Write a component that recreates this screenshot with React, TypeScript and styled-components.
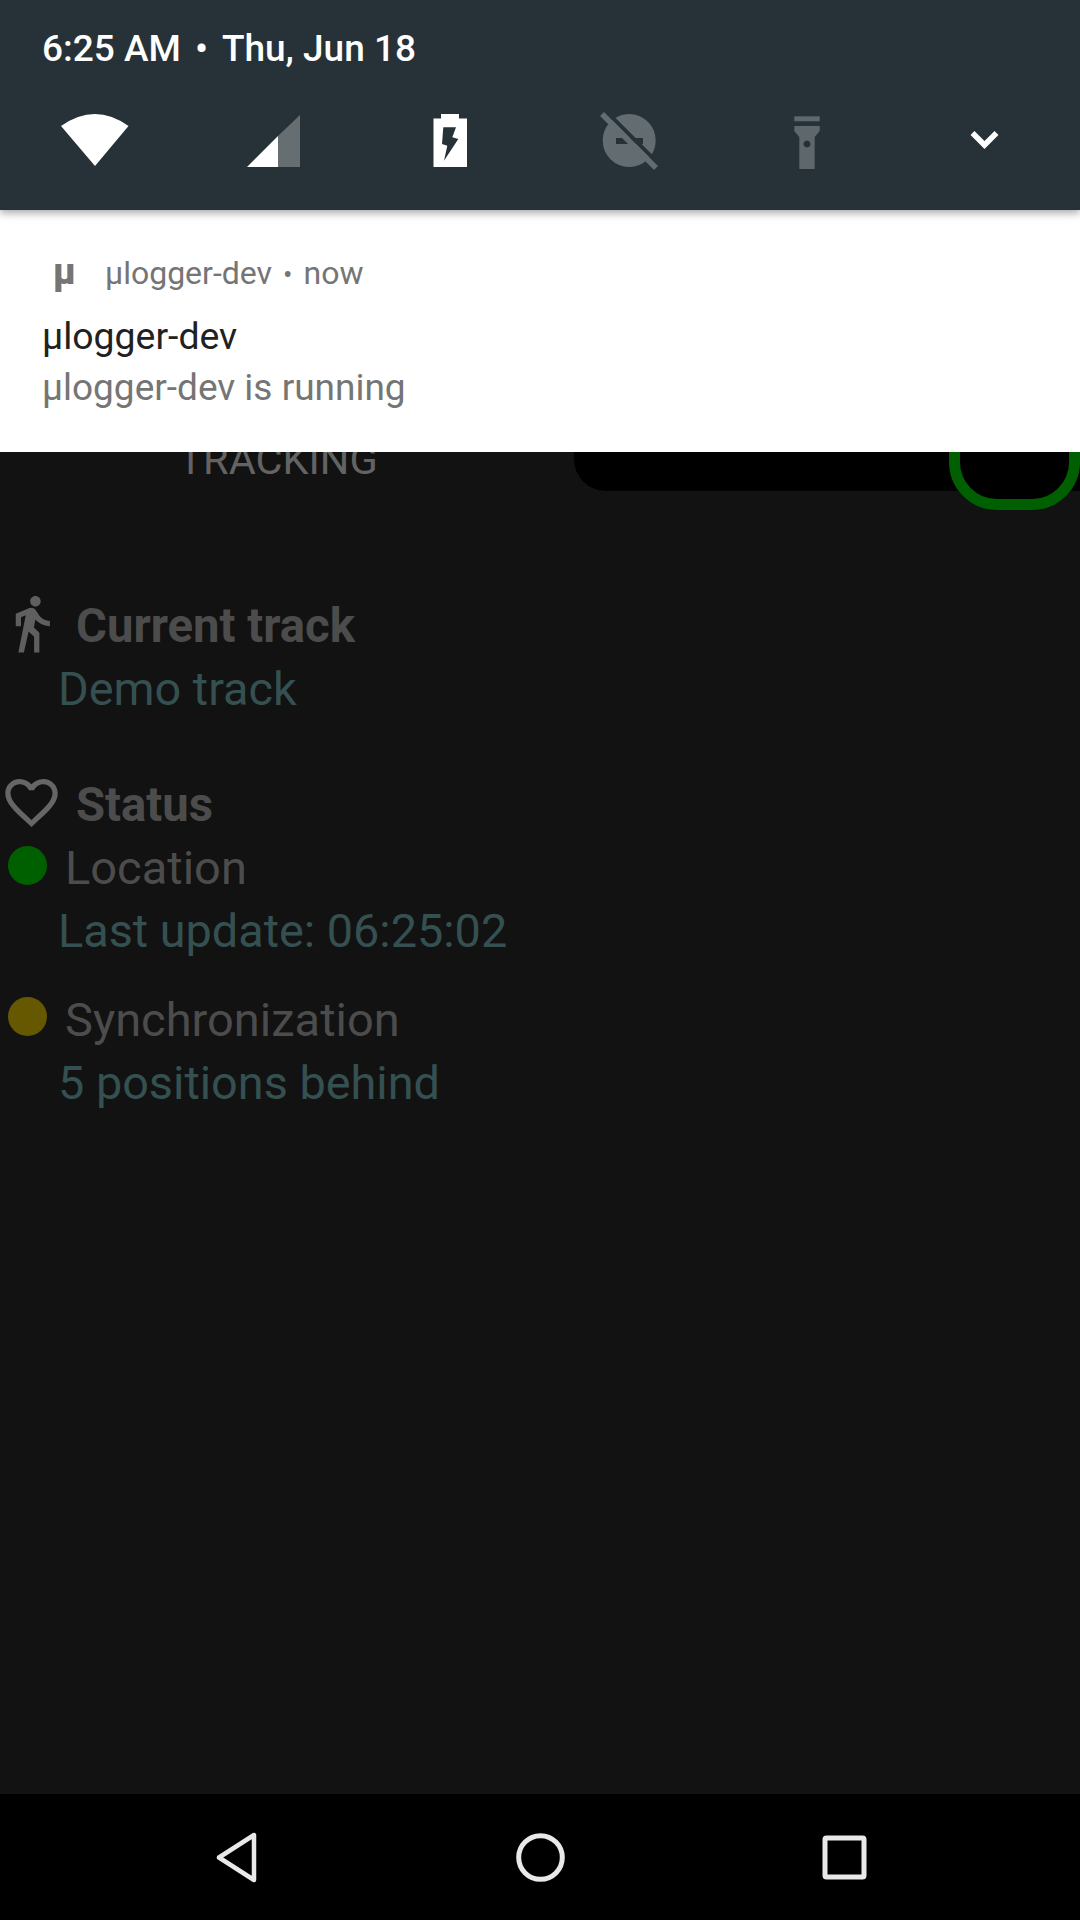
import styled, { createGlobalStyle } from "styled-components"

const GlobalStyle = createGlobalStyle`
    html, body {
        margin: 0;
        padding: 0;
        background: #121212;
    }
    body {
        font-family: Roboto, "Noto Sans", sans-serif;
    }
`

export default function App() {
    return <Screen>
        <GlobalStyle />
        <AppBody>
            <TrackingRow>
                <TrackingLabel>TRACKING</TrackingLabel>
                <SwitchTrack>
                    <SwitchThumb />
                </SwitchTrack>
            </TrackingRow>
            <Section>
                <SectionHead>
                    <SectionIcon viewBox="0 0 24 24">
                        <path fill="#5f5f5f" d="M13.5 5.5c1.1 0 2-.9 2-2s-.9-2-2-2-2 .9-2 2 .9 2 2 2zM9.8 8.9L7 23h2.1l1.8-8 2.1 2v6h2v-7.5l-2.1-2 .6-3C14.8 12 16.8 13 19 13v-2c-1.9 0-3.5-1-4.3-2.4l-1-1.6c-.4-.6-1-1-1.7-1-.3 0-.5.1-.8.1L6 8.3V13h2V9.6l1.8-.7" />
                    </SectionIcon>
                    <SectionTitle>Current track</SectionTitle>
                </SectionHead>
                <Detail>Demo track</Detail>
            </Section>
            <Section $gap={53}>
                <SectionHead>
                    <SectionIcon viewBox="0 0 24 24">
                        <path fill="#666666" d="M16.5 3c-1.74 0-3.41.81-4.5 2.09C10.91 3.81 9.24 3 7.5 3 4.42 3 2 5.42 2 8.5c0 3.78 3.4 6.86 8.55 11.54L12 21.35l1.45-1.32C18.6 15.36 22 12.28 22 8.5 22 5.42 19.58 3 16.5 3zm-4.4 15.55l-.1.1-.1-.1C7.14 14.24 4 11.39 4 8.5 4 6.5 5.5 5 7.5 5c1.54 0 3.04.99 3.57 2.36h1.87C13.46 5.99 14.96 5 16.5 5c2 0 3.5 1.5 3.5 3.5 0 2.89-3.14 5.74-7.9 10.05z" />
                    </SectionIcon>
                    <SectionTitle>Status</SectionTitle>
                </SectionHead>
                <StatusRow>
                    <StatusDot $color="#006000" $top={9} />
                    <StatusName>Location</StatusName>
                </StatusRow>
                <Detail>Last update: 06:25:02</Detail>
                <StatusRow $gap={26}>
                    <StatusDot $color="#665800" $top={8} />
                    <StatusName>Synchronization</StatusName>
                </StatusRow>
                <Detail>5 positions behind</Detail>
            </Section>
        </AppBody>
        <NavBar>
            <svg width="63" height="63" viewBox="0 0 63 63">
                <path d="M14 31.5 L49 9 V54 Z" fill="none" stroke="#e9e9e9" strokeWidth="4.5" strokeLinejoin="round" />
            </svg>
            <svg width="63" height="63" viewBox="0 0 63 63">
                <circle cx="31.5" cy="31.5" r="21.8" fill="none" stroke="#e9e9e9" strokeWidth="5" />
            </svg>
            <svg width="63" height="63" viewBox="0 0 63 63">
                <rect x="12" y="12" width="39" height="39" rx="1.5" fill="none" stroke="#e9e9e9" strokeWidth="5" />
            </svg>
        </NavBar>
        <Shade>
            <QuickHeader>
                <DateLine>6:25 AM<DateDot>•</DateDot>Thu, Jun 18</DateLine>
                <QuickIcons>
                    <svg width="72" height="72" viewBox="0 0 72 72">
                        <path d="M2 22 Q36 -2 69.5 22 L36 62 Z" fill="#ffffff" />
                    </svg>
                    <svg width="72" height="72" viewBox="0 0 72 72">
                        <path d="M10 63 L41 32 V63 Z" fill="#ffffff" />
                        <path d="M41 32 L63 11 V63 H41 Z" fill="#676e72" />
                    </svg>
                    <svg width="72" height="72" viewBox="0 0 72 72">
                        <path d="M26 10 H44 V14.5 H52 V63 H18.5 V14.5 H26 Z" fill="#ffffff" />
                        <path d="M28.3 23.3 H41 L37.3 33.3 L43.3 35 L29 56.7 L32.3 41.7 L27 40 Z" fill="#263238" />
                    </svg>
                    <svg width="72" height="72" viewBox="0 0 72 72">
                        <circle cx="36.2" cy="36.5" r="26.5" fill="#626c71" />
                        <rect x="23" y="34" width="27" height="6" fill="#263238" />
                        <path d="M12.4 6.6 L66.4 60.6" stroke="#263238" strokeWidth="4" />
                        <path d="M9 10 L63 64" stroke="#626c71" strokeWidth="5.5" />
                    </svg>
                    <svg width="72" height="72" viewBox="0 0 72 72">
                        <path d="M23.3 12.3 H48.7 V17.3 H23.3 Z" fill="#5d676c" />
                        <path fillRule="evenodd" d="M23.3 22 H48.7 V27 L43.7 33 V65 H28.3 V33 L23.3 27 Z M36 36.5 a3.5 3.5 0 1 0 0.01 0 Z" fill="#5d676c" />
                    </svg>
                    <svg width="72" height="72" viewBox="0 0 72 72">
                        <path d="M23.5 29 L35.5 41 L47.5 29" fill="none" stroke="#ffffff" strokeWidth="5.5" />
                    </svg>
                </QuickIcons>
            </QuickHeader>
            <Notification>
                <NotificationMeta>
                    <AppGlyph>µ</AppGlyph>
                    <MetaText>µlogger-dev<MetaDot>•</MetaDot>now</MetaText>
                </NotificationMeta>
                <NotificationTitle>µlogger-dev</NotificationTitle>
                <NotificationBody>µlogger-dev is running</NotificationBody>
            </Notification>
        </Shade>
    </Screen>
}

const Screen = styled.div`
    position: relative;
    width: 1080px;
    height: 1920px;
    overflow: hidden;
    display: flex;
    flex-direction: column;
    background: #121212;
`

const AppBody = styled.main`
    flex: 1;
    padding-top: 390px;
`

const TrackingRow = styled.div`
    display: flex;
    height: 101px;
    margin-bottom: -1px;
    padding-left: 574px;
    position: relative;
`

const TrackingLabel = styled.span`
    position: absolute;
    left: 0;
    bottom: 8px;
    width: 556px;
    text-align: center;
    font-size: 41.5px;
    line-height: 46px;
    color: #636363;
`

const SwitchTrack = styled.div`
    position: relative;
    flex: 1;
    background: #000000;
    border-radius: 0 0 0 32px;
`

const SwitchThumb = styled.div`
    position: absolute;
    right: 0;
    bottom: -19px;
    box-sizing: border-box;
    width: 131px;
    height: 131px;
    border: 11px solid #005f00;
    border-radius: 48px;
    background: #000000;
`

const Section = styled.section<{ $gap?: number }>`
    margin-top: ${p => p.$gap ?? 105}px;
`

const SectionHead = styled.div`
    display: flex;
    height: 63px;
`

const SectionIcon = styled.svg`
    width: 63px;
    height: 63px;
    margin-top: -3px;
    flex: none;
`

const SectionTitle = styled.h2`
    margin: 0 0 0 13px;
    font-size: 47.25px;
    font-weight: 700;
    line-height: 63px;
    color: #4c4c4c;
`

const Detail = styled.div`
    height: 63px;
    padding-left: 58px;
    font-size: 46.8px;
    line-height: 62px;
    color: #355050;
`

const StatusRow = styled.div<{ $gap?: number }>`
    display: flex;
    height: 63px;
    margin-top: ${p => p.$gap ?? 0}px;
`

const StatusDot = styled.span<{ $color: string; $top: number }>`
    width: 39px;
    height: 39px;
    margin: ${p => p.$top}px 18px 0 8px;
    border-radius: 50%;
    flex: none;
    background: ${p => p.$color};
`

const StatusName = styled.span`
    font-size: 47px;
    line-height: 61px;
    color: #4c4c4c;
`

const NavBar = styled.nav`
    height: 126px;
    flex: none;
    display: flex;
    justify-content: center;
    align-items: center;
    gap: 241px;
    background: #000000;
`

const Shade = styled.div`
    position: absolute;
    top: 0;
    left: 0;
    right: 0;
`

const QuickHeader = styled.header`
    position: relative;
    height: 210px;
    box-sizing: border-box;
    padding-top: 27px;
    background: #263238;
    box-shadow: 0 3px 8px rgba(0, 0, 0, 0.35);
`

const DateLine = styled.div`
    padding-left: 42px;
    font-size: 37px;
    font-weight: 500;
    line-height: 44px;
    color: #ffffff;
`

const DateDot = styled.span`
    margin: 0 14px;
`

const QuickIcons = styled.div`
    display: grid;
    grid-template-columns: repeat(6, 1fr);
    justify-items: center;
    margin-top: 33px;
    padding: 0 6px;
`

const Notification = styled.div`
    height: 242px;
    box-sizing: border-box;
    padding: 43px 42px 0;
    background: #ffffff;
`

const NotificationMeta = styled.div`
    display: flex;
    align-items: center;
    height: 44px;
    color: #757575;
`

const AppGlyph = styled.span`
    width: 63px;
    padding: 0 0 6px 11px;
    box-sizing: border-box;
    font-family: Roboto, sans-serif;
    font-size: 36px;
    font-weight: 900;
    line-height: 38px;
`

const MetaText = styled.span`
    padding-bottom: 2px;
    font-size: 32px;
    line-height: 42px;
`

const MetaDot = styled.span`
    margin: 0 11px;
    font-size: 28px;
`

const NotificationTitle = styled.div`
    margin-top: 13px;
    font-size: 37.4px;
    line-height: 52px;
    color: #212121;
`

const NotificationBody = styled.div`
    font-size: 37px;
    line-height: 52px;
    color: #757575;
`
